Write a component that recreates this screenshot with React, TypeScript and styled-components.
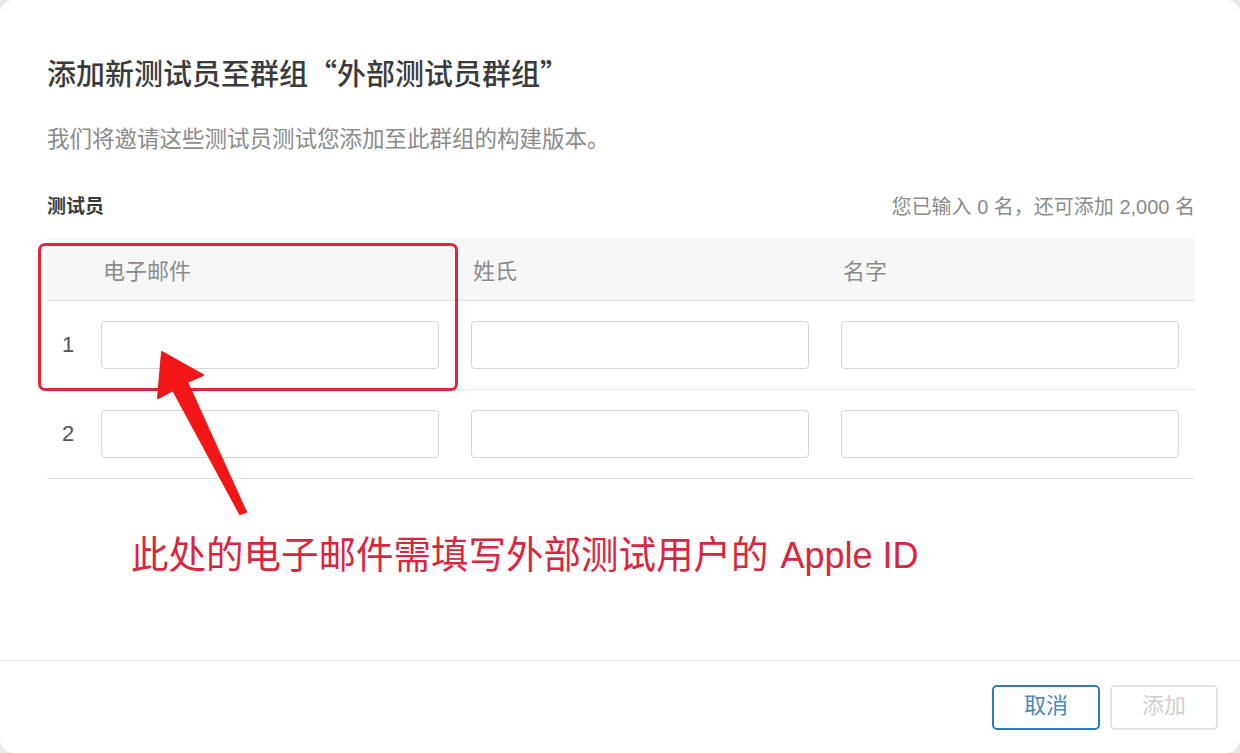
import styled, { createGlobalStyle } from 'styled-components'

const GlobalStyle = createGlobalStyle`
  html, body {
    margin: 0;
    padding: 0;
    background: #e9e9e9;
  }
  body {
    font-family: "Liberation Sans", "Noto Sans CJK SC", sans-serif;
  }
`

const Modal = styled.div`
  position: relative;
  width: 1240px;
  height: 753px;
  background: #fff;
  border-radius: 14px;
  display: flex;
  flex-direction: column;
  overflow: hidden;
`

const Body = styled.div`
  flex: 1;
  padding: 52px 45px 0 47px;
  display: flex;
  flex-direction: column;
`

const Title = styled.h1`
  margin: 0;
  font-family: "Noto Sans CJK SC", sans-serif;
  font-size: 29px;
  line-height: 40px;
  font-weight: 500;
  color: #3b3b3b;
`

const Subtitle = styled.p`
  margin: 33px 0 0;
  font-size: 22.5px;
  line-height: 30px;
  color: #8b8b8b;
`

const LabelRow = styled.div`
  margin-top: 38px;
  display: flex;
  justify-content: space-between;
  align-items: center;
  line-height: 28px;
`

const Label = styled.span`
  font-size: 19px;
  font-weight: 700;
  color: #3b3b3b;
`

const Count = styled.span`
  font-size: 20px;
  color: #8b8b8b;
`

const Table = styled.div`
  margin-top: 17px;
`

const Row = styled.div<{ $head?: boolean }>`
  display: grid;
  grid-template-columns: 22px 1fr 1fr 1fr;
  column-gap: 32px;
  padding-right: 16px;
  align-items: center;
  height: ${(p) => (p.$head ? '62px' : '88px')};
  background: ${(p) => (p.$head ? '#f7f7f7' : '#fff')};
  border-bottom: 1px solid #e3e3e3;
`

const HeadCell = styled.div`
  font-size: 22px;
  color: #8b8b8b;
  padding-left: 2px;
`

const Num = styled.div`
  padding-left: 15px;
  font-size: 22px;
  color: #555;
`

const Input = styled.input`
  box-sizing: border-box;
  width: 100%;
  height: 48px;
  border: 1px solid #d5d5d5;
  border-radius: 4px;
  background: #fff;
  font-size: 18px;
  padding: 0 12px;
  outline: none;
`

const Note = styled.div`
  margin-top: 51px;
  padding-left: 84px;
  font-size: 37.5px;
  line-height: 50px;
  color: #d9263e;
  white-space: nowrap;
`

const Latin = styled.span`
  font-size: 36px;
  margin-left: 12px;
`

const Footer = styled.div`
  border-top: 1px solid #e6e6e6;
  height: 93px;
  box-sizing: border-box;
  padding: 24px 22px 0 0;
  display: flex;
  justify-content: flex-end;
  gap: 10px;
`

const Button = styled.button<{ $primary?: boolean }>`
  width: 108px;
  height: 45px;
  padding: 0 0 4px;
  border-radius: 5px;
  background: #fff;
  font-family: inherit;
  font-size: 22px;
  line-height: 1;
  border: ${(p) => (p.$primary ? '2px solid #2f7dc0' : '2px solid #e2e2e2')};
  color: ${(p) => (p.$primary ? '#4a88bd' : '#cfcfcf')};
`

const Highlight = styled.div`
  position: absolute;
  left: 38px;
  top: 243px;
  width: 414px;
  height: 142px;
  border: 3px solid #e4243f;
  border-radius: 7px;
  pointer-events: none;
`

const Overlay = styled.svg`
  position: absolute;
  left: 0;
  top: 0;
  pointer-events: none;
`

export default function App() {
  const rows = [1, 2]
  return (
    <>
      <GlobalStyle />
      <Modal>
        <Body>
          <Title>添加新测试员至群组“外部测试员群组”</Title>
          <Subtitle>我们将邀请这些测试员测试您添加至此群组的构建版本。</Subtitle>
          <LabelRow>
            <Label>测试员</Label>
            <Count>您已输入 0 名，还可添加 2,000 名</Count>
          </LabelRow>
          <Table>
            <Row $head>
              <span />
              <HeadCell>电子邮件</HeadCell>
              <HeadCell>姓氏</HeadCell>
              <HeadCell>名字</HeadCell>
            </Row>
            {rows.map((n) => (
              <Row key={n}>
                <Num>{n}</Num>
                <Input />
                <Input />
                <Input />
              </Row>
            ))}
          </Table>
          <Note>
            此处的电子邮件需填写外部测试用户的<Latin>Apple ID</Latin>
          </Note>
        </Body>
        <Footer>
          <Button $primary>取消</Button>
          <Button>添加</Button>
        </Footer>
        <Highlight />
        <Overlay width="1240" height="753" viewBox="0 0 1240 753">
          <polygon
            points="162,352 203,375 187,382 246,512 240,514 173,390 158,398"
            fill="#f31616"
            stroke="#f31616"
            strokeWidth="2"
            strokeLinejoin="round"
          />
        </Overlay>
      </Modal>
    </>
  )
}
